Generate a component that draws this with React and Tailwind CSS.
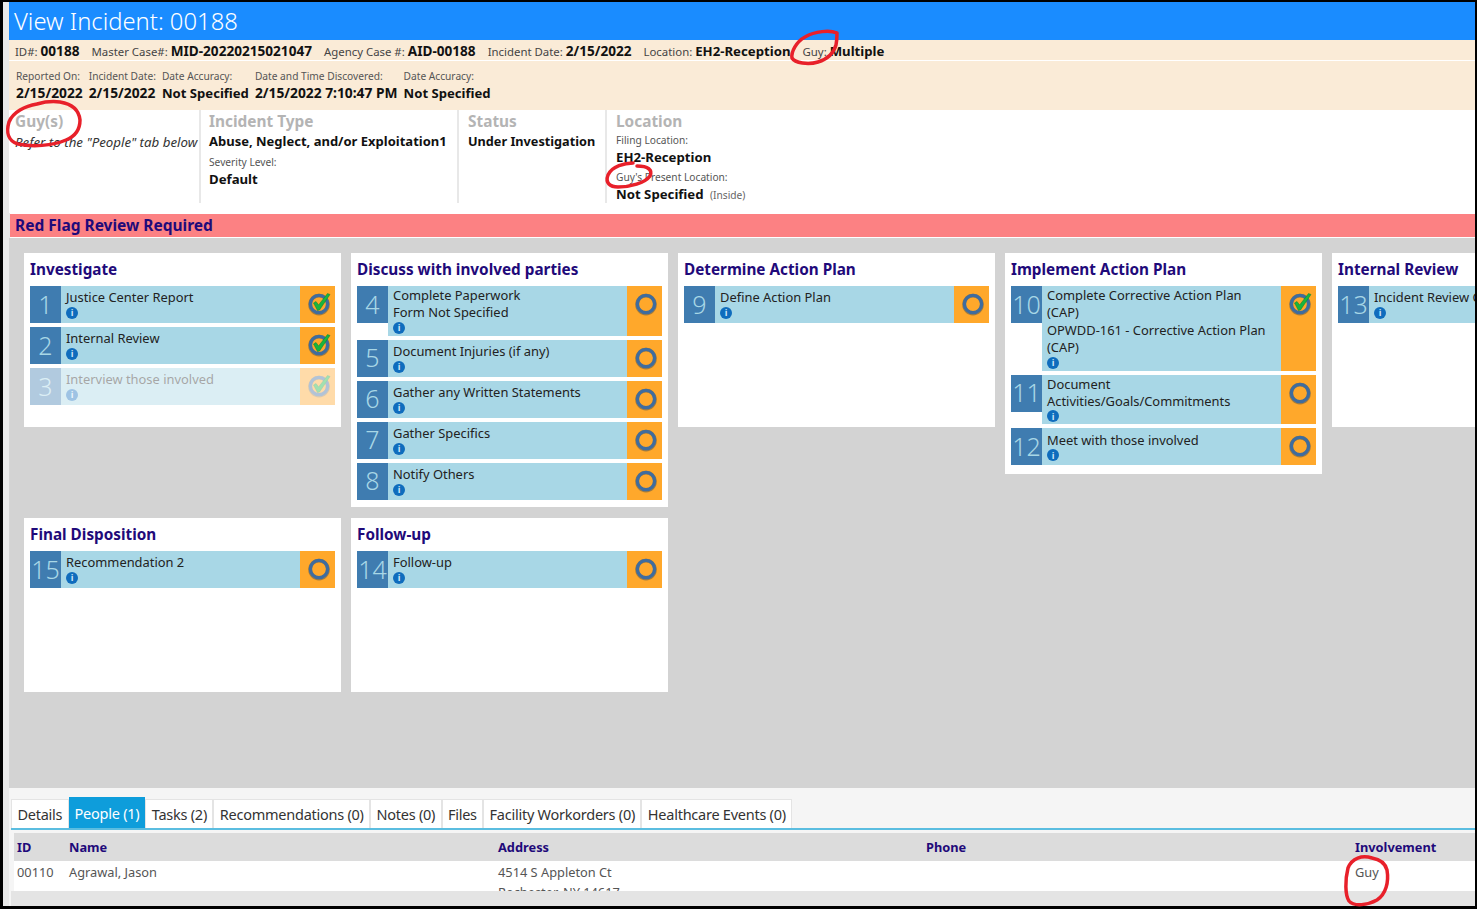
import React from "react";

const font = { fontFamily: '"Noto Sans", "Open Sans", sans-serif' };

const firstRow = [
  {
    title: "Investigate",
    h: "h-[174px]",
    steps: [
      { n: 1, lines: ["Justice Center Report"], done: true },
      { n: 2, lines: ["Internal Review"], done: true },
      { n: 3, lines: ["Interview those involved"], done: true, faded: true },
    ],
  },
  {
    title: "Discuss with involved parties",
    h: "h-[254px]",
    steps: [
      { n: 4, lines: ["Complete Paperwork", "Form Not Specified"] },
      { n: 5, lines: ["Document Injuries (if any)"] },
      { n: 6, lines: ["Gather any Written Statements"] },
      { n: 7, lines: ["Gather Specifics"] },
      { n: 8, lines: ["Notify Others"] },
    ],
  },
  {
    title: "Determine Action Plan",
    h: "h-[174px]",
    steps: [{ n: 9, lines: ["Define Action Plan"] }],
  },
  {
    title: "Implement Action Plan",
    h: "h-[221px]",
    steps: [
      {
        n: 10,
        lines: ["Complete Corrective Action Plan", "(CAP)", "OPWDD-161 - Corrective Action Plan", "(CAP)"],
        done: true,
      },
      { n: 11, lines: ["Document", "Activities/Goals/Commitments"] },
      { n: 12, lines: ["Meet with those involved"] },
    ],
  },
  {
    title: "Internal Review",
    h: "h-[174px]",
    steps: [{ n: 13, lines: ["Incident Review Committee"] }],
  },
];

const secondRow = [
  { title: "Final Disposition", h: "h-[174px]", steps: [{ n: 15, lines: ["Recommendation 2"] }] },
  { title: "Follow-up", h: "h-[174px]", steps: [{ n: 14, lines: ["Follow-up"] }] },
];

const tabs = [
  "Details",
  "People (1)",
  "Tasks (2)",
  "Recommendations (0)",
  "Notes (0)",
  "Files",
  "Facility Workorders (0)",
  "Healthcare Events (0)",
];

const StatusIcon = ({ done }) => (
  <svg width="26" height="26" viewBox="0 0 26 26">
    <circle cx="13" cy="13.6" r="9" fill="none" stroke="#5d5a4c" strokeWidth="3.6" opacity="0.55" />
    <circle cx="13" cy="13" r="8.6" fill="none" stroke="#3f6c9e" strokeWidth="3.4" />
    {done && <path d="M7.5 12l2.5-1.5 2.6 3.4L21.5 2.5l2.5 1-10.5 15.5-2 .5z" fill="#17b53f" stroke="#0c7f2c" strokeWidth="0.5" />}
  </svg>
);

const InfoDot = () => (
  <span className="flex h-[12px] w-[12px] items-center justify-center rounded-full bg-[#0f6cbd] text-[9px] font-bold leading-none text-[#cfe6f7]">
    i
  </span>
);

const Step = ({ step }) => (
  <div className={`flex items-start ${step.faded ? "opacity-40" : ""}`}>
    <div className="flex h-[37px] w-[31px] shrink-0 items-center justify-center bg-[#3f7cb0] pb-[1px] text-[25px] font-light leading-none text-[#a8d7e6]">
      {step.n}
    </div>
    <div className="flex min-h-[37px] min-w-0 flex-1 self-stretch">
      <div className="flex flex-1 flex-col justify-center bg-[#a8d7e6] py-[1px] pl-[5px] text-[12.9px] leading-[17.4px] text-[#222]">
        {step.lines.map((line) => (
          <div key={line + step.n} className="whitespace-nowrap">
            {line}
          </div>
        ))}
        <div className="h-[13px]">
          <InfoDot />
        </div>
      </div>
      <div className="flex w-[35px] shrink-0 justify-center bg-[#ffa82b] pl-[2px] pt-[5px]">
        <StatusIcon done={step.done} />
      </div>
    </div>
  </div>
);

const Card = ({ card }) => (
  <div className={`w-[317px] shrink-0 overflow-hidden bg-white px-[6px] ${card.h}`}>
    <h3 className="mb-[1px] text-[15.3px] font-bold leading-[32px] text-[#1f0a7a]">{card.title}</h3>
    <div className="flex flex-col gap-[4px]">
      {card.steps.map((step) => (
        <Step key={step.n} step={step} />
      ))}
    </div>
  </div>
);

const Meta = ({ label, value, narrow }) => (
  <span className="whitespace-nowrap">
    <span className="text-[11.4px] text-[#444]">{label} </span>
    <span className={`font-bold text-[#111] ${narrow ? "text-[13.2px]" : "text-[13.6px]"}`}>{value}</span>
  </span>
);

const Stacked = ({ label, value, narrow }) => (
  <div className="flex flex-col">
    <span className="text-[10.2px] leading-[14px] text-[#555]">{label}</span>
    <span className={`font-bold leading-[20px] text-[#111] ${narrow ? "text-[13.1px]" : "text-[13.8px]"}`}>{value}</span>
  </div>
);

const Annotations = () => (
  <svg className="pointer-events-none absolute left-0 top-0" width="1477" height="909" fill="none" stroke="#e8202a" strokeWidth="3.5" strokeLinecap="round">
    <path d="M837 33C830 30 815 31 805 37C796 42 791 52 792 58C795 63 808 65 818 62C828 59 834 52 836 45C837 40 837 36 837 33" />
    <path d="M37 104C25 106 13 112 9 122C6 132 8 141 18 144C32 147 52 146 66 140C76 136 80 128 80 120C79 110 72 104 60 102C52 101 44 102 37 104" />
    <path d="M633 163C625 163 612 166 608 175C605 183 610 187 618 187C630 187 645 183 650 176C653 170 648 166 637 166" />
    <path d="M1372 858C1362 855 1352 858 1348 868C1345 880 1345 895 1349 901C1354 907 1368 905 1377 900C1386 894 1389 882 1387 870C1385 862 1378 859 1372 858" />
  </svg>
);

export default function App() {
  return (
    <div style={font} className="relative h-[909px] w-[1477px] overflow-hidden bg-black pb-[3px] pl-[3px] pr-[2px] pt-[2px]">
      <div className="flex h-full flex-col bg-[#e9e9e9] pl-[6px]">
        <header className="flex h-[38px] shrink-0 items-center bg-[#1a8cff] pl-[5px] pt-[2px] text-[23.8px] font-light text-white">
          View Incident: 00188
        </header>

        <div className="flex h-[21px] shrink-0 items-center gap-[12px] border-b border-white bg-[#faebd7] pl-[6px]">
          <Meta label="ID#:" value="00188" />
          <Meta label="Master Case#:" value="MID-20220215021047" />
          <Meta label="Agency Case #:" value="AID-00188" />
          <Meta label="Incident Date:" value="2/15/2022" />
          <Meta label="Location:" value="EH2-Reception" narrow />
          <Meta label="Guy:" value="Multiple" narrow />
        </div>

        <div className="flex h-[49px] shrink-0 items-center gap-[6px] bg-[#faebd7] pl-[7px]">
          <Stacked label="Reported On:" value="2/15/2022" />
          <Stacked label="Incident Date:" value="2/15/2022" />
          <Stacked label="Date Accuracy:" value="Not Specified" narrow />
          <Stacked label="Date and Time Discovered:" value="2/15/2022 7:10:47 PM" />
          <Stacked label="Date Accuracy:" value="Not Specified" narrow />
        </div>

        <div className="flex h-[103px] shrink-0 bg-white">
          <section className="h-[93px] w-[190px] shrink-0 pl-[6px]">
            <h2 className="pt-[2px] text-[15.4px] font-bold leading-[20px] text-[#b4b4b4]">Guy(s)</h2>
            <p className="whitespace-nowrap text-[13.3px] italic leading-[21px] text-[#333]">Refer to the "People" tab below</p>
          </section>
          <section className="h-[93px] w-[258px] shrink-0 border-l-2 border-[#e8e8e8] pl-[8px]">
            <h2 className="pt-[2px] text-[15.4px] font-bold leading-[20px] text-[#b4b4b4]">Incident Type</h2>
            <p className="whitespace-nowrap text-[13px] font-bold leading-[19px] text-[#111]">Abuse, Neglect, and/or Exploitation1</p>
            <p className="pt-[2px] text-[10.2px] leading-[18px] text-[#555]">Severity Level:</p>
            <p className="text-[13.2px] font-bold leading-[17px] text-[#111]">Default</p>
          </section>
          <section className="h-[93px] w-[148px] shrink-0 border-l-2 border-[#e8e8e8] pl-[9px]">
            <h2 className="pt-[2px] text-[15.4px] font-bold leading-[20px] text-[#b4b4b4]">Status</h2>
            <p className="whitespace-nowrap text-[12.7px] font-bold leading-[19px] text-[#111]">Under Investigation</p>
          </section>
          <section className="h-[93px] flex-1 border-l-2 border-[#e8e8e8] pl-[9px]">
            <h2 className="pt-[2px] text-[15.4px] font-bold leading-[20px] text-[#b4b4b4]">Location</h2>
            <p className="pt-[1px] text-[10.2px] leading-[15px] text-[#555]">Filing Location:</p>
            <p className="text-[13.2px] font-bold leading-[18px] text-[#111]">EH2-Reception</p>
            <p className="pt-[4px] text-[10.2px] leading-[15px] text-[#555]">Guy's Present Location:</p>
            <p className="text-[13.2px] font-bold leading-[18px] text-[#111]">
              Not Specified <span className="pl-[3px] text-[10.2px] font-normal text-[#666]">(Inside)</span>
            </p>
          </section>
        </div>

        <div className="ml-[1px] flex h-[25px] shrink-0 items-center border-y border-white bg-[#fc8183] pl-[5px] pt-[1px] text-[15.5px] font-bold text-[#1f0a7a]">
          Red Flag Review Required
        </div>

        <main className="h-[550px] shrink-0 overflow-hidden bg-[#d3d3d3] pl-[15px] pt-[15px]">
          <div className="flex h-[255px] items-start gap-[10px]">
            {firstRow.map((card) => (
              <Card key={card.title} card={card} />
            ))}
          </div>
          <div className="mt-[10px] flex items-start gap-[10px]">
            {secondRow.map((card) => (
              <Card key={card.title} card={card} />
            ))}
          </div>
        </main>

        <div className="flex min-h-0 flex-1 flex-col bg-[#f5f5f5] pl-[2px] pt-[10px]">
          <div className="flex h-[32px] shrink-0 items-end border-b-2 border-[#5bbde0]">
            {tabs.map((tab) => (
              <div
                key={tab}
                className={
                  tab === "People (1)"
                    ? "flex h-[31px] items-center bg-[#0e9ddb] px-[6px] pt-[3px] text-[14.5px] tracking-[-0.25px] text-white"
                    : "flex h-[29px] items-center border border-b-0 border-[#e4e4e4] bg-white px-[5.4px] pt-[1px] text-[14.5px] tracking-[-0.25px] text-[#333]"
                }
              >
                {tab}
              </div>
            ))}
          </div>
          <div className="ml-[3px] mt-[3px] grid h-[28px] shrink-0 grid-cols-[52px_429px_428px_429px_1fr] items-center bg-[#dcdcdc] pl-[3px] pt-[2px] text-[12.8px] font-bold text-[#1f0a7a]">
            <span>ID</span>
            <span>Name</span>
            <span>Address</span>
            <span>Phone</span>
            <span>Involvement</span>
          </div>
          <div className="ml-[3px] grid h-[30px] shrink-0 grid-cols-[52px_429px_428px_429px_1fr] overflow-hidden bg-white pl-[3px] pt-[1px] text-[12.8px] leading-[20px] text-[#555]">
            <span>00110</span>
            <span>Agrawal, Jason</span>
            <span>
              4514 S Appleton Ct
              <br />
              Rochester, NY 14617
            </span>
            <span></span>
            <span>Guy</span>
          </div>
          <div className="flex-1 bg-[#e4e4e4]"></div>
        </div>
      </div>
      <Annotations />
    </div>
  );
}
